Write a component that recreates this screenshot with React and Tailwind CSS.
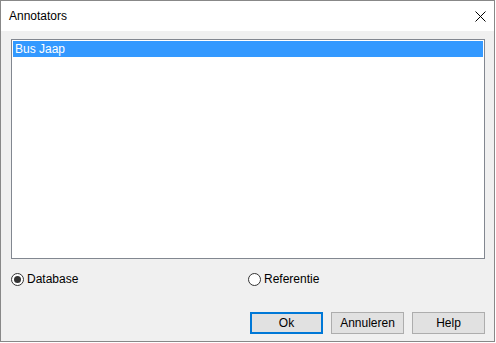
import React, { useState } from "react";

const Radio = ({ checked, label, onClick }) => (
  <button type="button" onClick={onClick} className="flex items-center gap-[3px] text-[12px] text-black">
    <span className="flex h-[13px] w-[13px] items-center justify-center rounded-full border border-[#333333] bg-white">
      {checked && <span className="h-[7px] w-[7px] rounded-full bg-[#333333]" />}
    </span>
    <span className="leading-[16px]">{label}</span>
  </button>
);

const Btn = ({ children, primary }) => (
  <button
    type="button"
    className={
      primary
        ? "h-[22px] w-[73px] border-2 border-[#0078d7] bg-[#e1e1e1] text-[12px] text-black"
        : "h-[22px] w-[73px] border border-[#adadad] bg-[#e1e1e1] text-[12px] text-black"
    }
  >
    {children}
  </button>
);

export default function App() {
  const [mode, setMode] = useState("database");

  return (
    <div className="h-[343px] w-[496px] bg-white" style={{ fontFamily: '"Liberation Sans", Arial, sans-serif' }}>
      <div className="flex h-[342px] w-[495px] flex-col border border-[#888888]">
        <div className="flex h-[30px] items-center justify-between bg-white pl-[8px] pr-[7px] text-[12px] text-black">
          <span>Annotators</span>
          <svg width="11" height="11" viewBox="0 0 11 11" className="mr-[1px]">
            <path d="M0.5 0.5 L10.5 10.5 M10.5 0.5 L0.5 10.5" stroke="#000" strokeWidth="1" />
          </svg>
        </div>
        <div className="flex flex-1 flex-col bg-[#f0f0f0] pl-[10px] pt-[8px]">
          <div className="h-[220px] w-[474px] border border-[#828790] bg-white p-[1px]">
            <div className="flex h-[16px] items-center bg-[#3399ff] pl-[2px] text-[12px] text-white">Bus Jaap</div>
          </div>
          <div className="mt-[12px] flex h-[16px] items-center">
            <div className="w-[237px]">
              <Radio checked={mode === "database"} label="Database" onClick={() => setMode("database")} />
            </div>
            <Radio checked={mode === "referentie"} label="Referentie" onClick={() => setMode("referentie")} />
          </div>
          <div className="mt-[25px] flex justify-end gap-[8px] pr-[9px]">
            <Btn primary>Ok</Btn>
            <Btn>Annuleren</Btn>
            <Btn>Help</Btn>
          </div>
        </div>
      </div>
    </div>
  );
}
